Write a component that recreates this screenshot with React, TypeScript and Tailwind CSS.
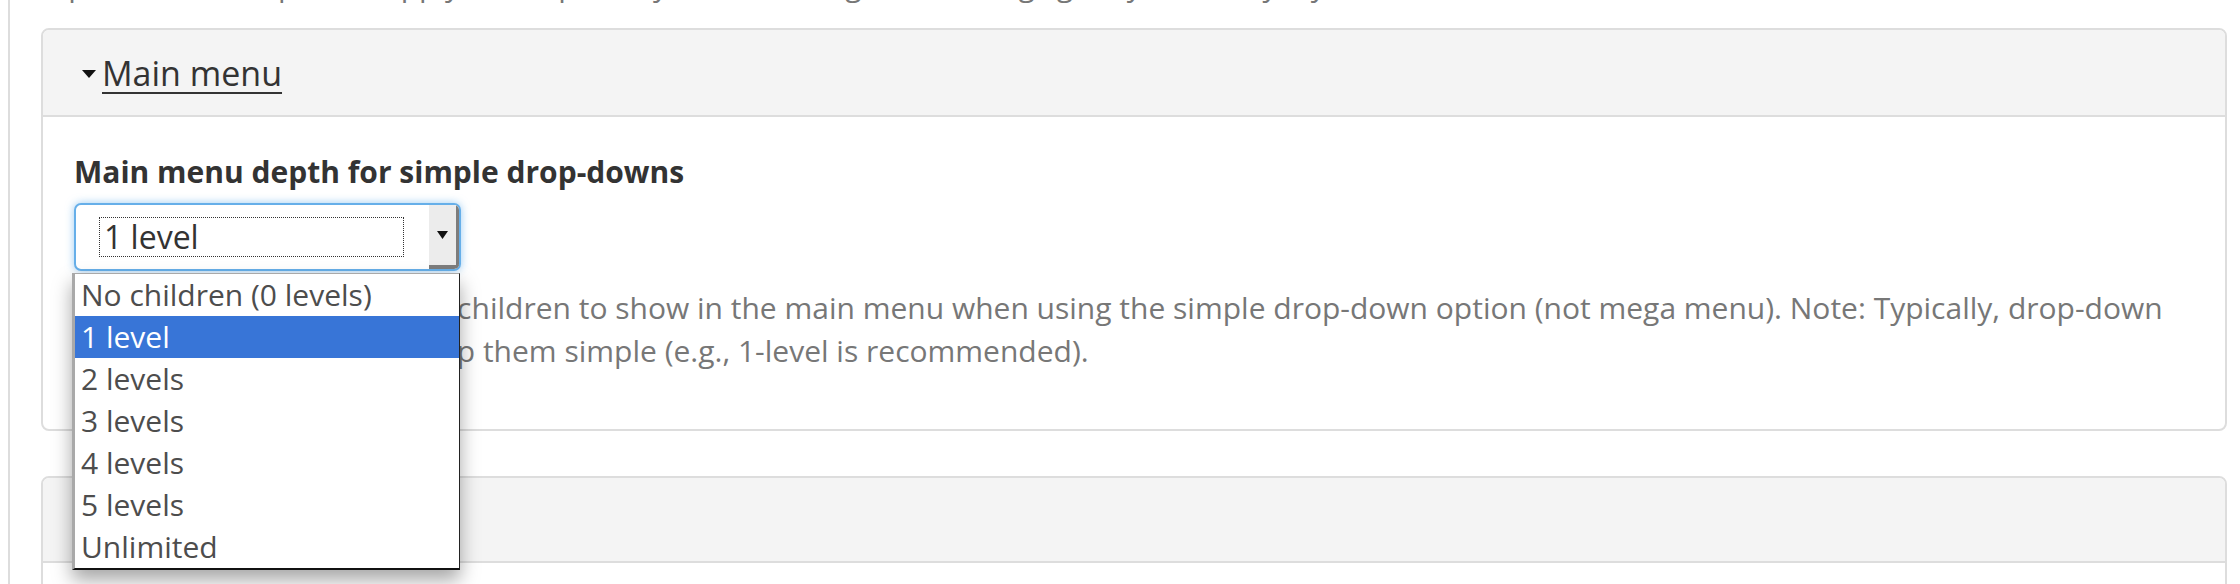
import { useState } from 'react'

const levels = [
  'No children (0 levels)',
  '1 level',
  '2 levels',
  '3 levels',
  '4 levels',
  '5 levels',
  'Unlimited',
]

export default function App() {
  const [selected] = useState('1 level')

  return (
    <div className="relative w-[2240px] h-[584px] overflow-hidden bg-white font-['Open_Sans',sans-serif]">
      <div className="ml-[8px] h-full flex flex-col border-l-2 border-[#ddd] pl-[31px] pr-[13px]">
        {/* intro text, mostly scrolled off */}
        <p className="-mt-[37px] pl-[4px] text-[30px] leading-[43px] text-[#777] whitespace-nowrap">
          Options, as set up here, apply to the primary menu. Change the settings gently, and only if you need to.
        </p>

        {/* Main menu panel */}
        <div className="mt-[22px] border-2 border-[#ddd] rounded-[8px] overflow-hidden shrink-0">
          <div className="h-[87px] bg-[#f4f4f4] border-b-2 border-[#ddd] flex items-center pl-[39px]">
            <svg width="14" height="8" viewBox="0 0 14 8" className="mr-[6px] mt-[2px]">
              <polygon points="0,0 14,0 7,8" fill="#111" />
            </svg>
            <span className="text-[34px] leading-[40px] text-[#333] underline decoration-2 underline-offset-[6px]">
              Main menu
            </span>
          </div>

          <div className="pt-[33px] pb-[57px] px-[31px]">
            <h3 className="text-[30px] leading-[43px] font-bold text-[#333]">
              Main menu depth for simple drop-downs
            </h3>

            {/* select, focused */}
            <div className="mt-[10px] w-[387px] h-[68px] flex border-2 border-[#66afe9] rounded-[7px] overflow-hidden shadow-[0_0_9px_rgba(102,175,233,0.65)] bg-white">
              <div className="flex-1 flex items-center pl-[23px]">
                <div className="w-[305px] h-[40px] border border-dotted border-[#333] flex items-center pl-[4px] text-[32px] leading-[40px] text-[#333]">
                  {selected}
                </div>
              </div>
              <div className="w-[30px] bg-[#ececec] border-r-[3px] border-b-[4px] border-[#7d7d7d] flex items-center justify-center">
                <svg width="11" height="8" viewBox="0 0 11 8">
                  <polygon points="0,0 11,0 5.5,8" fill="#111" />
                </svg>
              </div>
            </div>

            <p className="mt-[15px] text-[30px] leading-[43px] text-[#777]">
              Set the number of levels of children to show in the main menu when using the simple drop-down option (not mega menu). Note: Typically, drop-down
              <br />
              menus work best if you keep them simple (e.g., 1-level is recommended).
            </p>
          </div>
        </div>

        {/* next panel */}
        <div className="mt-[45px] border-2 border-[#ddd] rounded-[8px] overflow-hidden shrink-0">
          <div className="h-[85px] bg-[#f4f4f4] border-b-2 border-[#ddd]" />
          <div className="h-[80px]" />
        </div>
      </div>

      {/* open select list */}
      <ul className="absolute left-[72px] top-[273px] w-[388px] bg-white border-t border-l-[3px] border-t-[#a9a9a9] border-l-[#a9a9a9] border-r border-r-[#222] border-b-2 border-b-[#111] shadow-[0_10px_18px_rgba(0,0,0,0.35)]">
        {levels.map((l) => (
          <li
            key={l}
            className={`h-[42px] flex items-center pl-[6px] text-[30px] leading-[42px] ${
              l === selected ? 'bg-[#3875d7] text-white' : 'text-[#4d4d4d]'
            }`}
          >
            {l}
          </li>
        ))}
      </ul>
    </div>
  )
}
